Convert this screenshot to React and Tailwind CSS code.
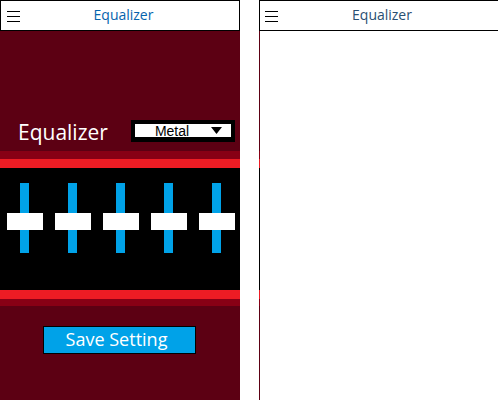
import React from "react";

const SLIDERS = [0, 1, 2, 3, 4];

function Burger() {
  return (
    <div className="flex flex-col gap-[4px] w-[13px] shrink-0">
      <span className="block h-px bg-black" />
      <span className="block h-px bg-black" />
      <span className="block h-px bg-black" />
    </div>
  );
}

function Header({ titleClass }) {
  return (
    <div className="h-[31px] flex items-center border border-black bg-white">
      <div className="pl-[6px] pt-[1px]">
        <Burger />
      </div>
      <div className={`flex-1 text-center text-[14px] leading-none pb-[2px] pr-[12px] ${titleClass}`}>
        Equalizer
      </div>
    </div>
  );
}

function Slider() {
  return (
    <div className="relative w-[36px] h-[70px]">
      <div className="absolute left-[13px] top-0 w-[9px] h-[70px] bg-[#00a2e8]" />
      <div className="absolute left-0 top-[30px] w-[36px] h-[17px] bg-white" />
    </div>
  );
}

export default function App() {
  return (
    <div
      className="w-[498px] h-[400px] flex bg-white overflow-hidden"
      style={{ fontFamily: '"Open Sans", "Noto Sans", sans-serif' }}
    >
      {/* equalizer screen */}
      <div className="w-[240px] h-[400px] flex flex-col bg-[#5c0013] shrink-0">
        <Header titleClass="text-[#0563ad]" />

        <div className="mt-[89px] h-[22px] flex items-center">
          <span className="pl-[18px] text-white text-[21px] leading-[22px] pt-[2px]">Equalizer</span>
          <div className="ml-auto mr-[5px] w-[104px] h-[22px] bg-black pt-[4px] pb-[5px] px-[4px]">
            <div className="h-[13px] bg-white flex items-center">
              <span
                className="flex-1 text-center text-[14px] leading-none text-black pl-[2px]"
                style={{ fontFamily: '"Liberation Sans", Arial, sans-serif' }}
              >
                Metal
              </span>
              <svg width="11" height="7" viewBox="0 0 11 7" className="mr-[9px] ml-[4px]">
                <polygon points="0,0 11,0 5.5,7" fill="#000" />
              </svg>
            </div>
          </div>
        </div>

        <div className="mt-[9px] h-[8px] bg-[#880015]" />
        <div className="h-[9px] bg-[#ed1c24]" />
        <div className="h-[122px] bg-black flex gap-[12px] pl-[7px] pt-[15px]">
          {SLIDERS.map((i) => (
            <Slider key={i} />
          ))}
        </div>
        <div className="h-[9px] bg-[#ed1c24]" />
        <div className="h-[7px] bg-[#880015]" />

        <button className="mt-[20px] ml-[43px] w-[153px] h-[28px] border border-black bg-[#00a2e8] text-white text-[18px] leading-none pb-[2px] pr-[6px]">
          Save Setting
        </button>
      </div>

      {/* gap */}
      <div className="w-[19px] shrink-0" />

      {/* thin edge strip */}
      <div className="w-px h-[400px] flex flex-col shrink-0">
        <div className="h-[31px] bg-black" />
        <div className="h-[120px] bg-[#5c0013]" />
        <div className="h-[8px] bg-[#880015]" />
        <div className="h-[9px] bg-[#ed1c24]" />
        <div className="h-[122px] bg-black" />
        <div className="h-[9px] bg-[#ed1c24]" />
        <div className="h-[7px] bg-[#880015]" />
        <div className="flex-1 bg-[#5c0013]" />
      </div>

      {/* blank screen */}
      <div className="flex-1 h-[400px] flex flex-col">
        <div className="h-[31px] flex items-center border-t border-b border-black bg-white">
          <div className="pl-[5px] pt-[1px]">
            <Burger />
          </div>
          <div className="flex-1 text-center text-[14px] leading-none pb-[2px] pr-[12px] text-[#2a4f72]">
            Equalizer
          </div>
        </div>
      </div>
    </div>
  );
}
